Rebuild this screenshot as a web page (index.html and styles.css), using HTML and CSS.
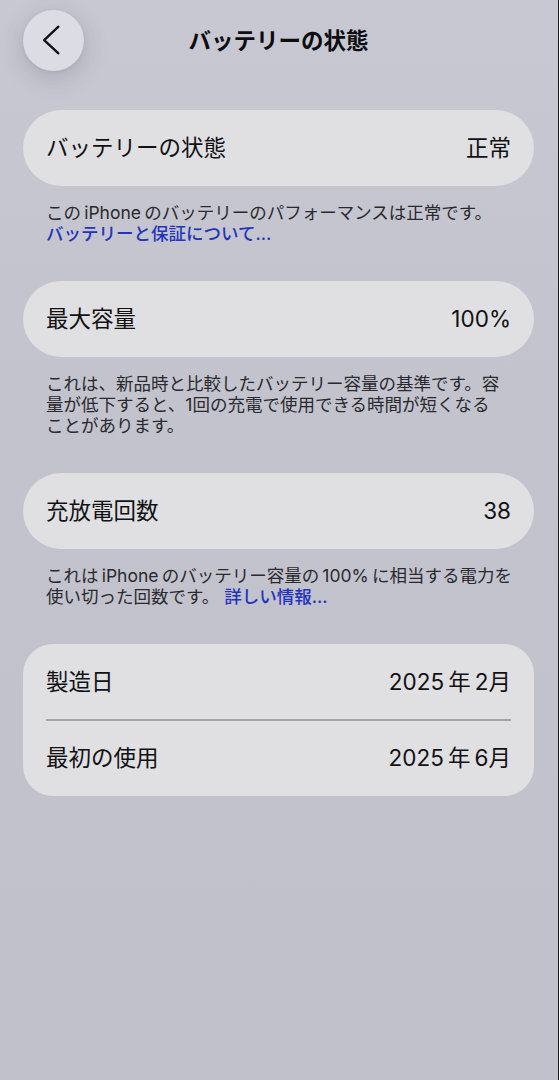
FILE: index.html
```html
<!DOCTYPE html>
<html lang="ja">
<head>
<meta charset="utf-8">
<title>バッテリーの状態</title>
<link rel="stylesheet" href="styles.css">
</head>
<body>
<div class="page">
  <header class="nav">
    <button class="back" aria-label="戻る">
      <svg viewBox="0 0 62 62" width="62" height="62">
        <path d="M36 16.5 L21.5 30 L36 43.5" fill="none" stroke="#111" stroke-width="2.4" stroke-linecap="round" stroke-linejoin="round"/>
      </svg>
    </button>
    <h1 class="title">バッテリーの状態</h1>
    <span class="spacer"></span>
  </header>

  <main class="content">
    <section class="group">
      <div class="card">
        <span class="label">バッテリーの状態</span>
        <span class="value">正常</span>
      </div>
      <p class="note">この&#8201;iPhone&#8201;のバッテリーのパフォーマンスは正常です。<br><a class="link" href="#">バッテリーと保証について...</a></p>
    </section>

    <section class="group">
      <div class="card">
        <span class="label">最大容量</span>
        <span class="value">100%</span>
      </div>
      <p class="note">これは、新品時と比較したバッテリー容量の基準です。容<br>量が低下すると、1回の充電で使用できる時間が短くなる<br>ことがあります。</p>
    </section>

    <section class="group">
      <div class="card">
        <span class="label">充放電回数</span>
        <span class="value">38</span>
      </div>
      <p class="note">これは&#8201;iPhone&#8201;のバッテリー容量の&#8201;100%&#8201;に相当する電力を<br>使い切った回数です。 <a class="link" href="#">詳しい情報...</a></p>
    </section>

    <section class="list">
      <div class="row">
        <span class="label">製造日</span>
        <span class="value">2025&#8201;年&#8201;2月</span>
      </div>
      <div class="divider"></div>
      <div class="row">
        <span class="label">最初の使用</span>
        <span class="value">2025&#8201;年&#8201;6月</span>
      </div>
    </section>
  </main>
</div>
</body>
</html>
```

FILE: styles.css
```css
html, body {
  margin: 0;
  padding: 0;
}

body {
  min-height: 1080px;
  background:
    linear-gradient(to right, transparent 558px, #1a1a1e 558px),
    linear-gradient(to bottom, #c8c8d2 0px, #c3c3cd 400px, #c1c1cb 1080px);
  font-family: "Inter", "Noto Sans CJK JP", sans-serif;
  color: #111114;
}

.page {
  width: 559px;
}

.nav {
  display: grid;
  grid-template-columns: 61px 1fr 61px;
  align-items: center;
  padding: 10px 25px 0 23px;
  height: 61px;
}

.back {
  width: 61px;
  height: 61px;
  border: none;
  border-radius: 50%;
  padding: 0;
  background: #dcdce4;
  box-shadow: 0 6px 24px rgba(60, 60, 80, 0.22), 0 1px 3px rgba(60, 60, 80, 0.08);
  display: flex;
  align-items: center;
  justify-content: center;
}

.back svg {
  display: block;
}

.title {
  margin: 0;
  text-align: center;
  font-size: 22.5px;
  font-weight: 700;
  line-height: 61px;
  color: #0d0d10;
}

.content {
  padding: 39px 25px 0 23px;
}

.card {
  height: 76px;
  border-radius: 38px;
  background: #e0e0e2;
  display: flex;
  align-items: center;
  justify-content: space-between;
  padding: 0 23px;
}

.label,
.value {
  font-size: 22.5px;
  line-height: 1;
  color: #111114;
}

.note {
  margin: 0;
  padding: 16px 23px 37px;
  font-size: 17.5px;
  line-height: 21px;
  color: #2a2a2e;
  white-space: nowrap;
}

.link {
  color: #2234bd;
  text-decoration: none;
  font-weight: 500;
}

.list {
  border-radius: 30px;
  background: #e0e0e2;
  overflow: hidden;
}

.row {
  height: 76px;
  display: flex;
  align-items: center;
  justify-content: space-between;
  padding: 0 23px;
}

.divider {
  height: 1.5px;
  margin: -0.75px 23px;
  background: #a6a6aa;
}
```
